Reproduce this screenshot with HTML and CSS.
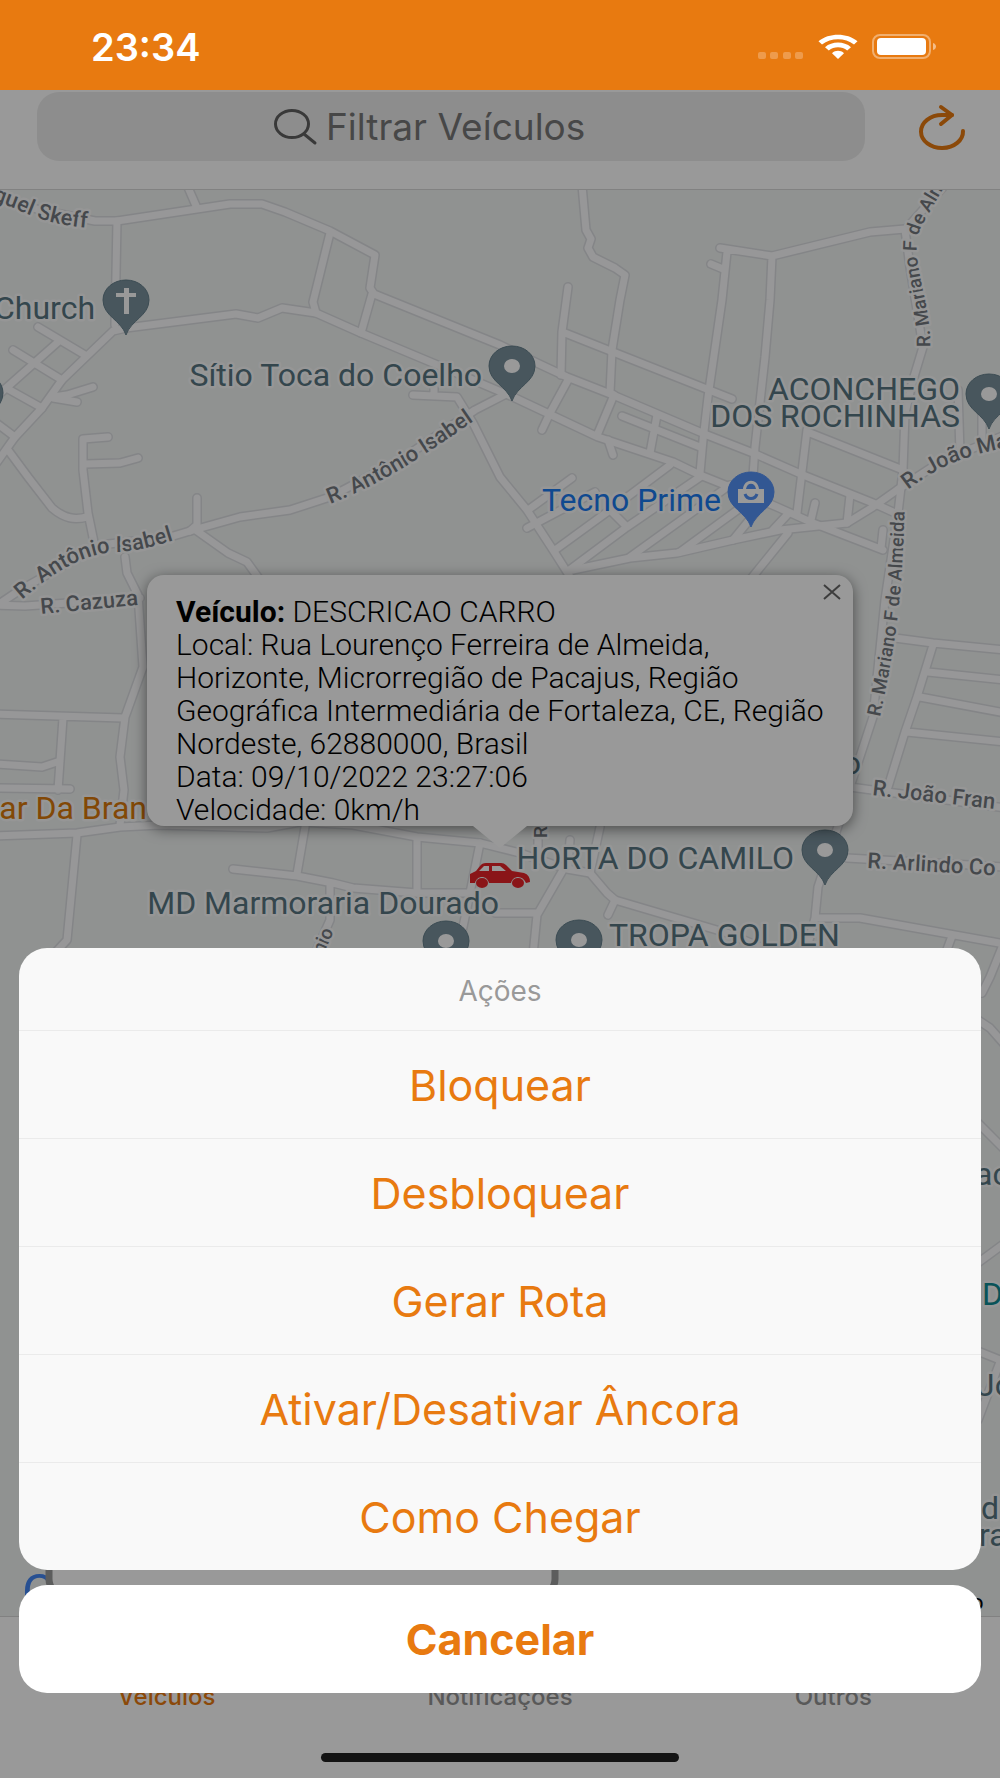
FILE: index.html
```html
<!DOCTYPE html>
<html lang="pt-BR">
<head>
  <meta charset="UTF-8" />
  <meta name="viewport" content="width=device-width, initial-scale=1.0"/>
  <title>Veículos</title>
  <link rel="stylesheet" href="styles.css">
</head>
<body>

<!-- Barra de status -->
<div class="status-bar">
  <time class="status-time">23:34</time>
  <div class="status-icons">
    <svg class="icon-signal" width="46" height="26" viewBox="0 0 46 26" aria-hidden="true">
      <rect x="0" y="18" width="8" height="7" rx="2"/>
      <rect x="12" y="18" width="8" height="7" rx="2"/>
      <rect x="25" y="18" width="8" height="7" rx="2"/>
      <rect x="37" y="18" width="8" height="7" rx="2"/>
    </svg>
    <svg class="icon-wifi" width="40" height="26" viewBox="0 0 40 26" aria-hidden="true">
      <path d="M0.5 7.2C11 -1.4 29 -1.4 39.5 7.2L36 10.6C27 3.4 13 3.4 4 10.6Z"/>
      <path d="M7 13.2C14 7 26 7 33 13.2L29.2 16.6C24 12.2 16 12.2 10.8 16.6Z"/>
      <path d="M14 19.2C17.5 16 22.5 16 26 19.2L20 25Z"/>
    </svg>
    <svg class="icon-battery" width="64" height="26" viewBox="0 0 64 26" aria-hidden="true">
      <rect class="battery-case" x="1" y="1" width="57" height="23" rx="7"/>
      <rect x="5" y="4" width="49" height="17" rx="4"/>
      <path class="battery-tip" d="M61 9C65 10 65 15 61 16Z"/>
    </svg>
  </div>
</div>

<div class="screen">
  <!-- Filtro -->
  <header class="toolbar">
    <label class="search">
      <svg width="44" height="38" viewBox="0 0 44 38" aria-hidden="true">
        <ellipse cx="18" cy="16" rx="16.5" ry="13.5"/>
        <path d="M30 26L41 35"/>
      </svg>
      <input type="text" placeholder="Filtrar Veículos" aria-label="Filtrar Veículos">
    </label>
    <button class="refresh" aria-label="Atualizar">
      <svg width="48" height="48" viewBox="0 0 48 48" aria-hidden="true">
        <path d="M34 12H24A21 16.500 0 1 0 45 28"/>
        <path d="M23 4L34 12L23 21"/>
      </svg>
    </button>
  </header>

  <!-- Mapa -->
  <main class="map">
    <svg class="map-canvas" viewBox="0 190 1000 1426" preserveAspectRatio="xMidYMin slice" role="img" aria-label="Mapa">
      <defs>
        <g id="roads">
          <path d="M-10 195L40 210L95 221H117L230 204H262L285 212L330 231L375 255L370 288L374 294L500 345L537 363L567 377L613 395L707 435L753 453L803 475L873 503L893 512"/>
          <path d="M187 185L197 208M117 221L115 325"/>
          <path d="M330 233L313 302L316 313M372 294L361 333"/>
          <path d="M126 328L236 314L258 318L282 308L316 313L361 333L440 366L513 397L598 437L673 462L700 475L730 487L777 507L813 523L883 550"/>
          <path d="M126 328L113 331L62 380L42 408L15 437L-5 465"/>
          <path d="M38 327L85 355M13 350L62 380M58 342L-5 398M8 389L42 408M-5 422L15 437"/>
          <path d="M53 397L67 395L93 387M53 398L77 402M8 450L28 477L52 508C65 519 75 520 87 517"/>
          <path d="M108 437L83 439V470L88 513L95 547M85 464L120 463L138 458"/>
          <path d="M197 498V525L190 531M197 531L228 553L247 562L260 580"/>
          <path d="M-10 610L20 590L100 545L170 537L190 531L240 517L290 510L330 497L400 460L475 410L510 392"/>
          <path d="M-10 605L25 606L140 598M125 557L127 573L138 595L143 667L125 717L120 757L124 790L120 825"/>
          <path d="M-5 714L123 718M63 718L58 790M-5 764L42 767L60 761M-5 788L70 789"/>
          <path d="M-5 836L77 833L120 827L160 825L267 828L300 822L353 825L417 837L480 843L520 853L567 869L590 873L607 893L615 900L727 933L780 955"/>
          <path d="M77 835L67 940L55 953M305 827L297 874M233 869L297 876L333 883L353 888L417 893L470 893M330 885V920L310 965"/>
          <path d="M417 838V893M480 843L470 893L463 927L455 960M600 827L590 873M570 840L568 867M538 840V858"/>
          <path d="M563 870L537 915L533 955M495 913H537M615 900L608 915"/>
          <path d="M840 820L818 887L815 918L805 955M815 918H860L1005 944M952 936L945 955M847 858L1005 867"/>
          <path d="M895 638L933 643L1005 650M933 645L917 697L905 732L888 787M928 672L1005 680M920 697L1005 713M907 732L1005 742"/>
          <path d="M945 185L905 230L910 267L923 347L913 380L905 413L903 470L898 513L885 600L873 717L850 787L1005 808"/>
          <path d="M582 185L586 230L591 239L588 248L593 257L615 268L625 275L620 300L612 350L610 393L614 395L598 433"/>
          <path d="M568 287L562 332L561 375M565 333L613 352L732 399M568 380L550 413L542 430"/>
          <path d="M720 248L772 256L870 232L905 229M711 264L723 269M727 252L722 300L708 397L703 440L700 473M772 256L770 300L765 357L755 447L752 490"/>
          <path d="M622 416L700 447M657 415L650 453M608 440L613 455M810 433L903 470M807 430L797 513M850 495L847 523M815 503L811 520"/>
          <path d="M568 571L630 558L677 553L733 540L780 530L847 523L873 507L897 490L940 462L1005 435"/>
          <path d="M572 478L528 510M595 492L527 528M670 465L610 510L555 550M700 477L627 527L568 571M730 485L630 557M747 503L680 552M755 513L733 540M787 515L773 530M613 513L627 527M788 533L750 580"/>
          <path d="M413 395L457 397L473 423L500 477L527 510L555 553L572 580M434 372V395"/>
          <path d="M958 390L960 453M982 410V445M883 530L881 548"/>
          <path d="M1005 940L990 977L982 993M975 1018L990 1028L1005 1045M975 1120L1005 1150M975 1265L1005 1243M975 1350L1005 1362M1000 1362L978 1420"/>
        </g>
        <g id="pin">
          <path d="M0 -55C-13 -55 -23 -46 -23 -35C-23 -19 -5 -15 0 0C5 -15 23 -19 23 -35C23 -46 13 -55 0 -55Z"/>
        </g>
        <path id="p-skeff" d="M-8 200L14 208C42 222 67 227 104 229"/>
        <path id="p-isabel1" d="M330 504C390 480 425 455 495 406"/>
        <path id="p-isabel2" d="M22 600C60 566 90 552 120 552C142 550 160 545 190 535"/>
        <path id="p-cazuza" d="M41 614L160 603"/>
        <path id="p-mariano1" d="M930 347C932 300 906 255 922 225L960 160"/>
        <path id="p-mariano2" d="M880 717C896 640 903 600 905 490"/>
        <path id="p-joao1" d="M908 490C940 465 965 455 1020 445"/>
        <path id="p-joao2" d="M872 795L1040 814"/>
        <path id="p-arlindo" d="M867 868L1040 878"/>
        <path id="p-onio" d="M319 965L345 905"/>
      </defs>

      <use href="#roads" class="road-casing"/>
      <use href="#roads" class="road"/>

      <!-- Nomes das ruas -->
      <g class="street">
        <text><textPath href="#p-skeff">guel Skeff</textPath></text>
        <text><textPath href="#p-isabel1">R. Antônio Isabel</textPath></text>
        <text><textPath href="#p-isabel2">R. Antônio Isabel</textPath></text>
        <text><textPath href="#p-cazuza">R. Cazuza</textPath></text>
        <text class="street-up"><textPath href="#p-mariano1">R. Mariano F de Alm</textPath></text>
        <text class="street-up"><textPath href="#p-mariano2">R. Mariano F de Almeida</textPath></text>
        <text><textPath href="#p-joao1">R. João Ma</textPath></text>
        <text><textPath href="#p-joao2">R. João Fran</textPath></text>
        <text><textPath href="#p-arlindo">R. Arlindo Co</textPath></text>
        <text class="street-up"><textPath href="#p-onio">ônio</textPath></text>
        <text class="street-up" transform="translate(547 838) rotate(-90)">R</text>
      </g>

      <!-- Lugares -->
      <g class="place">
        <text x="95" y="319" text-anchor="end">Church</text>
        <text x="482" y="386" text-anchor="end">Sítio Toca do Coelho</text>
        <text x="960" y="400" text-anchor="end">ACONCHEGO</text>
        <text x="960" y="427" text-anchor="end">DOS ROCHINHAS</text>
        <text class="shop" x="721" y="511" text-anchor="end">Tecno Prime</text>
        <text class="food" x="147" y="819" text-anchor="end">ar Da Bran</text>
        <text x="861" y="774" text-anchor="end">o</text>
        <text x="794" y="869" text-anchor="end">HORTA DO CAMILO</text>
        <text x="499" y="914" text-anchor="end">MD Marmoraria Dourado</text>
        <text x="609" y="946">TROPA GOLDEN</text>
        <text x="975" y="1185">ac</text>
        <text class="leisure" x="982" y="1305">D</text>
        <text x="977" y="1396">Jo</text>
        <text x="981" y="1519">d</text>
        <text x="979" y="1546">ra</text>
      </g>

      <g class="pins">
        <use href="#pin" x="126" y="335"/>
        <path class="pin-mark" d="M124 288H129V293H136V297H129V314H124V297H116V293H124Z"/>
        <use href="#pin" x="512" y="401"/>
        <ellipse class="pin-mark" cx="512" cy="366" rx="8" ry="7"/>
        <use href="#pin" x="989" y="429"/>
        <ellipse class="pin-mark" cx="989" cy="394" rx="8" ry="7"/>
        <use href="#pin" x="-20" y="428"/>
        <use href="#pin" x="825" y="885"/>
        <ellipse class="pin-mark" cx="825" cy="850" rx="8" ry="7"/>
        <use href="#pin" x="446" y="976"/>
        <ellipse class="pin-mark" cx="446" cy="941" rx="8" ry="7"/>
        <use href="#pin" x="579" y="975"/>
        <ellipse class="pin-mark" cx="579" cy="940" rx="8" ry="7"/>
        <use href="#pin" class="pin-shop" x="751" y="527"/>
        <path class="pin-mark" d="M738 489H743C744 478 758 478 759 489H764V503H738ZM746 489H756C755 482 747 482 746 489Z"/>
        <path class="pin-smile" d="M745 494C747 500 755 500 757 494"/>
      </g>

      <!-- Veículo -->
      <g class="car">
        <path d="M470 883V874L476 871L480 866Q482 863 486 863H501Q504 863 506 865L512 871L524 873Q530 875 530 882L526 883C523 875 513 875 511 883H489C487 875 477 875 475 883Z"/>
        <ellipse cx="482" cy="883" rx="6" ry="5"/>
        <ellipse cx="518" cy="883" rx="6" ry="5"/>
        <path class="car-glass" d="M479 871L484 866H489V871ZM492 866H500L506 871H492Z"/>
      </g>

      <!-- Rodapé do mapa -->
      <text class="map-logo" x="22" y="1610">G</text>
      <rect class="map-box" x="49" y="1380" width="506" height="215" rx="16"/>
      <text class="map-terms" x="971" y="1610">o</text>
    </svg>

    <section class="popup">
      <button class="popup-close" aria-label="Fechar">
        <svg width="18" height="16" viewBox="0 0 18 16" aria-hidden="true">
          <path d="M1 1L17 15M17 1L1 15"/>
        </svg>
      </button>
      <p><strong>Veículo:</strong> DESCRICAO CARRO</p>
      <p>Local: Rua Lourenço Ferreira de Almeida, Horizonte, Microrregião de Pacajus, Região Geográfica Intermediária de Fortaleza, CE, Região Nordeste, 62880000, Brasil</p>
      <p>Data: 09/10/2022 23:27:06</p>
      <p>Velocidade: 0km/h</p>
    </section>
  </main>

  <!-- Abas -->
  <nav class="tabs">
    <a class="tab tab-active" href="#veiculos">Veículos</a>
    <a class="tab" href="#notificacoes">Notificações</a>
    <a class="tab" href="#outros">Outros</a>
  </nav>

  <!-- Menu de ações -->
  <div class="backdrop"></div>
  <div class="action-sheet" role="dialog" aria-labelledby="sheetTitle">
    <div class="sheet-group">
      <h2 class="sheet-title" id="sheetTitle">Ações</h2>
      <button class="sheet-button">Bloquear</button>
      <button class="sheet-button">Desbloquear</button>
      <button class="sheet-button">Gerar Rota</button>
      <button class="sheet-button">Ativar/Desativar Âncora</button>
      <button class="sheet-button">Como Chegar</button>
    </div>
    <button class="sheet-button sheet-cancel">Cancelar</button>
  </div>
  <div class="home-indicator"></div>
</div>

</body>
</html>
```
FILE: styles.css
```css
* {
  box-sizing: border-box;
}
body {
  margin: 0;
  min-height: 100vh;
  display: flex;
  flex-direction: column;
  font-family: Inter, "Liberation Sans", sans-serif;
  background: #ffffff;
}
button {
  font-family: inherit;
  border: none;
  padding: 0;
  cursor: pointer;
}

/* Barra de status */
.status-bar {
  height: 90px;
  padding: 3px 64px 0 91px;
  display: flex;
  justify-content: space-between;
  align-items: center;
  background: #e87a10;
  color: #ffffff;
}
.status-time {
  font-size: 38px;
  font-weight: 600;
}
.status-icons {
  display: flex;
  align-items: center;
  gap: 14px;
}
.status-icons svg {
  fill: #ffffff;
}
.status-icons .icon-signal {
  fill: rgba(255, 255, 255, 0.25);
}
.status-icons .battery-case {
  fill: none;
  stroke: rgba(255, 255, 255, 0.4);
  stroke-width: 2;
}
.status-icons .battery-tip {
  fill: rgba(255, 255, 255, 0.5);
}

.screen {
  position: relative;
  flex: 1;
  display: flex;
  flex-direction: column;
}

/* Filtro */
.toolbar {
  display: flex;
  align-items: center;
  gap: 53px;
  padding: 2px 34px 28px 37px;
  border-bottom: 1px solid #d8d8d8;
}
.search {
  flex: 1;
  height: 69px;
  padding-right: 36px;
  display: flex;
  justify-content: center;
  align-items: center;
  gap: 8px;
  border-radius: 22px;
  background: #ececec;
}
.search svg {
  fill: none;
  stroke: #606060;
  stroke-width: 3;
  stroke-linecap: round;
}
.search input {
  width: 266px;
  padding: 0;
  border: none;
  outline: none;
  background: none;
  font-family: inherit;
  font-size: 37px;
  color: #777777;
}
.search input::placeholder {
  color: #777777;
  opacity: 1;
}
.refresh {
  display: flex;
  background: none;
}
.refresh svg {
  fill: none;
  stroke: #e87a10;
  stroke-width: 4;
  stroke-linecap: round;
  stroke-linejoin: round;
}

/* Mapa */
.map {
  position: relative;
  flex: 1;
  overflow: hidden;
  background: #f0f3f2;
}
.map-canvas {
  position: absolute;
  width: 100%;
  height: 100%;
  font-family: Roboto, "Liberation Sans", sans-serif;
}
.road-casing,
.road {
  fill: none;
  stroke: #dcdee2;
  stroke-width: 10;
  stroke-linecap: round;
  stroke-linejoin: round;
}
.road {
  stroke: #fcfcfd;
  stroke-width: 7;
}
.street text,
.place text {
  stroke: #fafbfb;
  stroke-width: 5;
  stroke-linejoin: round;
  paint-order: stroke;
}
.street {
  font-size: 22px;
  font-weight: 500;
  fill: #74797f;
}
.street .street-up {
  font-size: 19px;
}
.place {
  font-size: 32px;
  fill: #577581;
}
.place .shop {
  fill: #1a7aef;
}
.place .food {
  fill: #d9790a;
}
.place .leisure {
  fill: #0f8a93;
}
.pins {
  fill: #788f9b;
  stroke: #66808c;
  stroke-width: 1;
}
.pins .pin-shop {
  fill: #5491f5;
  stroke: #5491f5;
}
.pins .pin-mark {
  fill: #ffffff;
  stroke: none;
}
.pins .pin-smile {
  fill: none;
  stroke: #5491f5;
  stroke-width: 3;
}
.car {
  fill: #e62329;
}
.car-glass {
  fill: #ffffff;
}
.map-logo {
  font-size: 50px;
  fill: #4285f4;
}
.map-box {
  fill: #ffffff;
  stroke: #999b9b;
  stroke-width: 7;
}
.map-terms {
  font-size: 22px;
  fill: #000000;
}

/* Balão do veículo */
.popup {
  position: absolute;
  top: 385px;
  left: 50%;
  width: 706px;
  margin-left: -353px;
  padding: 20px 18px 0 29px;
  border-radius: 17px;
  background: #ffffff;
  box-shadow: 0 3px 14px rgba(0, 0, 0, 0.5);
  font-family: Roboto, "Liberation Sans", sans-serif;
  font-size: 30px;
  font-weight: 300;
  line-height: 33px;
  color: #000000;
}
.popup::after {
  content: "";
  position: absolute;
  top: 100%;
  left: 50%;
  margin-left: -27px;
  border: 27px solid transparent;
  border-top: 22px solid #ffffff;
  border-bottom: none;
}
.popup p {
  margin: 0;
}
.popup strong {
  font-weight: 700;
}
.popup-close {
  position: absolute;
  top: 9px;
  right: 12px;
  display: flex;
  background: none;
}
.popup-close svg {
  stroke: #666666;
  stroke-width: 2;
}

/* Abas */
.tabs {
  display: flex;
  height: 162px;
  padding-top: 65px;
  border-top: 1px solid #d8d8d8;
}
.tab {
  flex: 1;
  text-align: center;
  font-size: 24px;
  font-weight: 500;
  color: #959595;
  text-decoration: none;
}
.tab-active {
  color: #e87a10;
}

/* Menu de ações */
.backdrop {
  position: absolute;
  top: 0;
  right: 0;
  bottom: 0;
  left: 0;
  background: rgba(0, 0, 0, 0.4);
}
.action-sheet {
  position: absolute;
  right: 19px;
  bottom: 85px;
  left: 19px;
  display: flex;
  flex-direction: column;
  gap: 15px;
}
.sheet-group {
  display: flex;
  flex-direction: column;
  overflow: hidden;
  border-radius: 28px;
  background: #f9f9f9;
}
.sheet-title {
  margin: 0;
  padding-top: 4px;
  font-size: 28px;
  font-weight: 400;
  line-height: 78px;
  text-align: center;
  color: #999999;
}
.sheet-button {
  height: 108px;
  border-top: 1px solid #ebebeb;
  background: none;
  font-size: 43px;
  color: #e87a10;
}
.sheet-cancel {
  border-top: none;
  border-radius: 28px;
  background: #ffffff;
  font-weight: 700;
}
.home-indicator {
  position: absolute;
  bottom: 16px;
  left: 50%;
  width: 358px;
  height: 9px;
  margin-left: -179px;
  border-radius: 5px;
  background: #141414;
}
```
